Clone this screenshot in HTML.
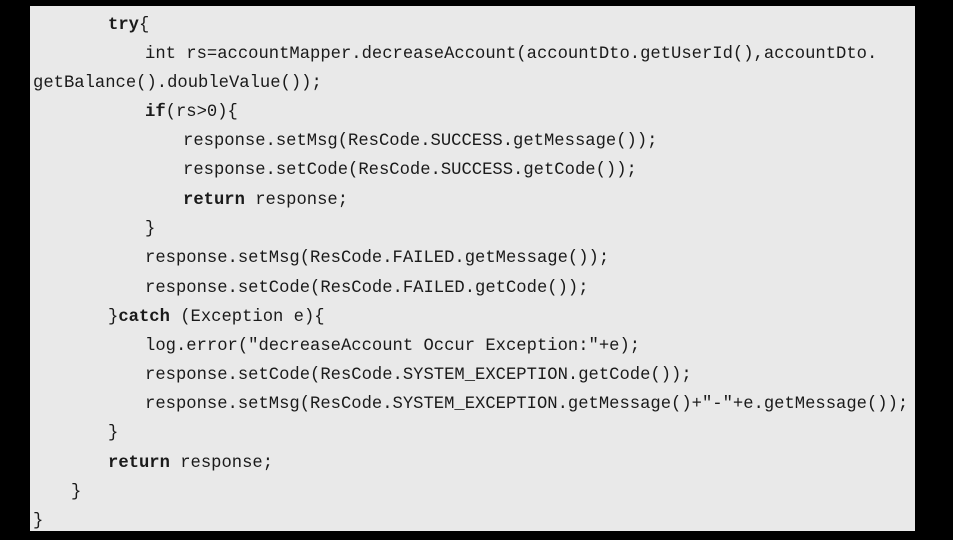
<!DOCTYPE html>
<html><head><meta charset="utf-8"><style>
html,body{margin:0;padding:0;background:#000;width:953px;height:540px;overflow:hidden}
#box{position:absolute;left:30px;top:6px;width:885px;height:525px;background:#e9e9e9}
.l{position:absolute;font-family:"Liberation Mono",monospace;font-size:17.2px;color:#1a1a1a;white-space:pre;line-height:20px}
b{font-weight:bold}
</style></head><body>
<div id="box"></div>
<div class="l" style="left:108px;top:16px"><b>try</b>{</div>
<div class="l" style="left:145px;top:45px">int rs=accountMapper.decreaseAccount(accountDto.getUserId(),accountDto.</div>
<div class="l" style="left:33px;top:74px">getBalance().doubleValue());</div>
<div class="l" style="left:145px;top:103px"><b>if</b>(rs&gt;0){</div>
<div class="l" style="left:183px;top:132px">response.setMsg(ResCode.SUCCESS.getMessage());</div>
<div class="l" style="left:183px;top:161px">response.setCode(ResCode.SUCCESS.getCode());</div>
<div class="l" style="left:183px;top:191px"><b>return</b> response;</div>
<div class="l" style="left:145px;top:220px">}</div>
<div class="l" style="left:145px;top:249px">response.setMsg(ResCode.FAILED.getMessage());</div>
<div class="l" style="left:145px;top:279px">response.setCode(ResCode.FAILED.getCode());</div>
<div class="l" style="left:108px;top:308px">}<b>catch</b> (Exception e){</div>
<div class="l" style="left:145px;top:337px">log.error("decreaseAccount Occur Exception:"+e);</div>
<div class="l" style="left:145px;top:366px">response.setCode(ResCode.SYSTEM_EXCEPTION.getCode());</div>
<div class="l" style="left:145px;top:395px">response.setMsg(ResCode.SYSTEM_EXCEPTION.getMessage()+"-"+e.getMessage());</div>
<div class="l" style="left:108px;top:424px">}</div>
<div class="l" style="left:108px;top:454px"><b>return</b> response;</div>
<div class="l" style="left:71px;top:483px">}</div>
<div class="l" style="left:33px;top:512px">}</div>
</body></html>
